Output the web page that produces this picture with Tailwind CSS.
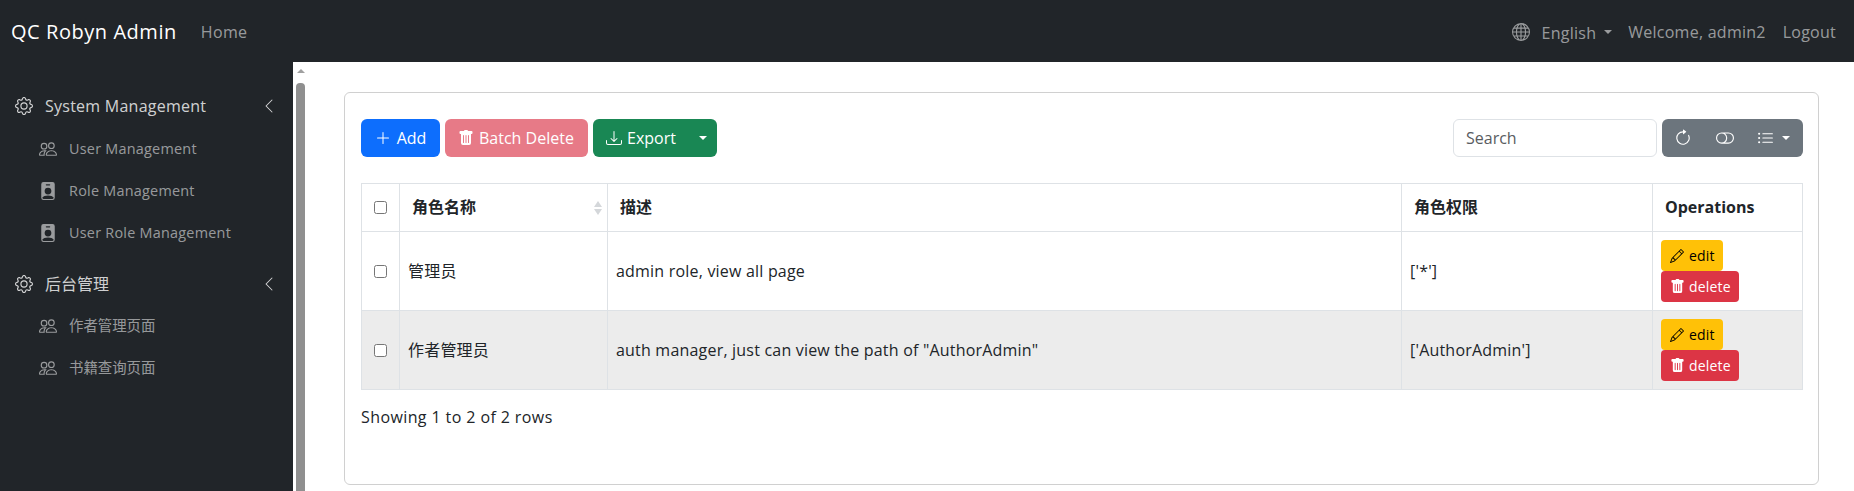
<!DOCTYPE html>
<html lang="en">
<head>
<meta charset="utf-8">
<title>QC Robyn Admin</title>
<script src="https://cdn.jsdelivr.net/npm/@tailwindcss/browser@4"></script>
</head>
<body class="h-[491px] w-[1854px] overflow-hidden bg-white font-['Open_Sans','Noto_Sans_CJK_SC',sans-serif] text-[16px] text-[#212529]">
<svg class="hidden">
<symbol id="gear" viewBox="0 0 16 16"><path d="M8 4.754a3.246 3.246 0 1 0 0 6.492 3.246 3.246 0 0 0 0-6.492zM5.754 8a2.246 2.246 0 1 1 4.492 0 2.246 2.246 0 0 1-4.492 0z"/><path d="M9.796 1.343c-.527-1.79-3.065-1.79-3.592 0l-.094.319a.873.873 0 0 1-1.255.52l-.292-.16c-1.64-.892-3.433.902-2.54 2.541l.159.292a.873.873 0 0 1-.52 1.255l-.319.094c-1.79.527-1.79 3.065 0 3.592l.319.094a.873.873 0 0 1 .52 1.255l-.16.292c-.892 1.64.901 3.434 2.541 2.54l.292-.159a.873.873 0 0 1 1.255.52l.094.319c.527 1.79 3.065 1.79 3.592 0l.094-.319a.873.873 0 0 1 1.255-.52l.292.16c1.64.893 3.434-.902 2.54-2.541l-.159-.292a.873.873 0 0 1 .52-1.255l.319-.094c1.79-.527 1.79-3.065 0-3.592l-.319-.094a.873.873 0 0 1-.52-1.255l.16-.292c.893-1.64-.902-3.433-2.541-2.54l-.292.159a.873.873 0 0 1-1.255-.52l-.094-.319zm-2.633.283c.246-.835 1.428-.835 1.674 0l.094.319a1.873 1.873 0 0 0 2.693 1.115l.291-.16c.764-.415 1.6.42 1.184 1.185l-.159.292a1.873 1.873 0 0 0 1.116 2.692l.318.094c.835.246.835 1.428 0 1.674l-.319.094a1.873 1.873 0 0 0-1.115 2.693l.16.291c.415.764-.42 1.6-1.185 1.184l-.291-.159a1.873 1.873 0 0 0-2.693 1.116l-.094.318c-.246.835-1.428.835-1.674 0l-.094-.319a1.873 1.873 0 0 0-2.692-1.115l-.292.16c-.764.415-1.6-.42-1.184-1.185l.159-.291A1.873 1.873 0 0 0 1.945 8.93l-.319-.094c-.835-.246-.835-1.428 0-1.674l.319-.094A1.873 1.873 0 0 0 3.06 4.377l-.16-.292c-.415-.764.42-1.6 1.185-1.184l.292.159a1.873 1.873 0 0 0 2.692-1.115l.094-.319z"/></symbol>
<symbol id="people" viewBox="0 0 16 16"><path d="M15 14s1 0 1-1-1-4-5-4-5 3-5 4 1 1 1 1h8Zm-7.978-1A.261.261 0 0 1 7 12.996c.001-.264.167-1.03.76-1.72C8.312 10.629 9.282 10 11 10c1.717 0 2.687.63 3.24 1.276.593.69.758 1.457.76 1.72l-.008.002a.274.274 0 0 1-.014.002H7.022ZM11 7a2 2 0 1 0 0-4 2 2 0 0 0 0 4Zm3-2a3 3 0 1 1-6 0 3 3 0 0 1 6 0ZM6.936 9.28a5.88 5.88 0 0 0-1.23-.247A7.35 7.35 0 0 0 5 9c-4 0-5 3-5 4 0 .667.333 1 1 1h4.216A2.238 2.238 0 0 1 5 13c0-1.01.377-2.042 1.09-2.904.243-.294.526-.569.846-.816ZM4.92 10A5.493 5.493 0 0 0 4 13H1c0-.26.164-1.03.76-1.724.545-.636 1.492-1.256 3.16-1.275ZM1.5 5.5a3 3 0 1 1 6 0 3 3 0 0 1-6 0Zm3-2a2 2 0 1 0 0 4 2 2 0 0 0 0-4Z"/></symbol>
<symbol id="badge" viewBox="0 0 16 16"><path d="M2 2a2 2 0 0 1 2-2h8a2 2 0 0 1 2 2v12a2 2 0 0 1-2 2H4a2 2 0 0 1-2-2V2zm4.5 0a.5.5 0 0 0 0 1h3a.5.5 0 0 0 0-1h-3zM8 11a3 3 0 1 0 0-6 3 3 0 0 0 0 6zm5 2.755C12.146 12.825 10.623 12 8 12s-4.146.826-5 1.755V14a1 1 0 0 0 1 1h8a1 1 0 0 0 1-1v-.245z"/></symbol>
<symbol id="chev" viewBox="0 0 16 16"><path fill-rule="evenodd" d="M11.354 1.646a.5.5 0 0 1 0 .708L5.707 8l5.647 5.646a.5.5 0 0 1-.708.708l-6-6a.5.5 0 0 1 0-.708l6-6a.5.5 0 0 1 .708 0z"/></symbol>
<symbol id="trash" viewBox="0 0 16 16"><path d="M2.5 1a1 1 0 0 0-1 1v1a1 1 0 0 0 1 1H3v9a2 2 0 0 0 2 2h6a2 2 0 0 0 2-2V4h.5a1 1 0 0 0 1-1V2a1 1 0 0 0-1-1H10a1 1 0 0 0-1-1H7a1 1 0 0 0-1 1H2.5zm3 4a.5.5 0 0 1 .5.5v7a.5.5 0 0 1-1 0v-7a.5.5 0 0 1 .5-.5zM8 5a.5.5 0 0 1 .5.5v7a.5.5 0 0 1-1 0v-7A.5.5 0 0 1 8 5zm3 .5v7a.5.5 0 0 1-1 0v-7a.5.5 0 0 1 1 0z"/></symbol>
<symbol id="pencil" viewBox="0 0 16 16"><path d="M12.146.146a.5.5 0 0 1 .708 0l3 3a.5.5 0 0 1 0 .708l-10 10a.5.5 0 0 1-.168.11l-5 2a.5.5 0 0 1-.65-.65l2-5a.5.5 0 0 1 .11-.168l10-10zM11.207 2.5 13.5 4.793 14.793 3.5 12.5 1.207 11.207 2.5zm1.586 3L10.5 3.207 4 9.707V10h.5a.5.5 0 0 1 .5.5v.5h.5a.5.5 0 0 1 .5.5v.5h.293l6.5-6.5zm-9.761 5.175-.106.106-1.528 3.821 3.821-1.528.106-.106A.5.5 0 0 1 5 12.5V12h-.5a.5.5 0 0 1-.5-.5V11h-.5a.5.5 0 0 1-.468-.325z"/></symbol>
</svg>

<header class="flex h-[62px] items-center bg-[#212529] pt-[1px] pr-[18px] pl-[11px]">
  <span class="text-[20px] tracking-[0.55px] text-white">QC Robyn Admin</span>
  <a class="ml-[24px] tracking-[0.3px] text-[#ffffff8c]">Home</a>
  <div class="ml-auto flex items-center tracking-[0.25px] text-[#ffffff8c]">
    <svg class="h-[18px] w-[18px] fill-current" viewBox="0 0 16 16"><path d="M0 8a8 8 0 1 1 16 0A8 8 0 0 1 0 8zm7.5-6.923c-.67.204-1.335.82-1.887 1.855A7.97 7.97 0 0 0 5.145 4H7.5V1.077zM4.09 4a9.267 9.267 0 0 1 .64-1.539 6.7 6.7 0 0 1 .597-.933A7.025 7.025 0 0 0 2.255 4H4.09zm-.582 3.5c.03-.877.138-1.718.312-2.5H1.674a6.958 6.958 0 0 0-.656 2.5h2.49zM4.847 5a12.5 12.5 0 0 0-.338 2.5H7.5V5H4.847zM8.5 5v2.5h2.99a12.495 12.495 0 0 0-.337-2.5H8.5zM4.51 8.5a12.5 12.5 0 0 0 .337 2.5H7.5V8.5H4.51zm3.99 0V11h2.653c.187-.765.306-1.608.338-2.5H8.5zM5.145 12c.138.386.295.744.468 1.068.552 1.035 1.218 1.65 1.887 1.855V12H5.145zm.182 2.472a6.696 6.696 0 0 1-.597-.933A9.268 9.268 0 0 1 4.09 12H2.255a7.024 7.024 0 0 0 3.072 2.472zM3.82 11a13.652 13.652 0 0 1-.312-2.5h-2.49c.062.89.291 1.733.656 2.5H3.82zm6.853 3.472A7.024 7.024 0 0 0 13.745 12H11.91a9.27 9.27 0 0 1-.64 1.539 6.688 6.688 0 0 1-.597.933zM8.5 12v2.923c.67-.204 1.335-.82 1.887-1.855.173-.324.33-.682.468-1.068H8.5zm3.68-1h2.146c.365-.767.594-1.61.656-2.5h-2.49a13.65 13.65 0 0 1-.312 2.5zm2.802-3.5a6.959 6.959 0 0 0-.656-2.5H12.18c.174.782.282 1.623.312 2.5h2.49zM11.27 2.461c.247.464.462.98.64 1.539h1.835a7.024 7.024 0 0 0-3.072-2.472c.218.284.418.598.597.933zM10.855 4a7.966 7.966 0 0 0-.468-1.068C9.835 1.897 9.17 1.282 8.5 1.077V4h2.355z"/></svg>
    <span class="mt-[2px] ml-[12px]">English</span>
    <span class="mt-[1px] ml-[8px] h-0 w-0 border-x-[4px] border-t-[4px] border-x-transparent border-t-current"></span>
    <span class="ml-[16px]">Welcome, admin2</span>
    <span class="ml-[17px]">Logout</span>
  </div>
</header>

<div class="flex h-[429px]">
  <aside class="w-[293px] shrink-0 bg-[#212529] pt-[24px] text-[14.4px] tracking-[0.25px] text-[#ffffff8c]">
    <div class="mb-[2px] flex h-[40px] items-center pr-[16px] pl-[15px] text-[16px] tracking-[0.25px] text-[#ffffffcc]">
      <svg class="h-[18px] w-[18px] fill-current"><use href="#gear"/></svg>
      <span class="ml-[12px]">System Management</span>
      <svg class="ml-auto h-[16px] w-[16px] fill-current"><use href="#chev"/></svg>
    </div>
    <div class="flex h-[42px] items-center pl-[39px]"><svg class="h-[18px] w-[18px] fill-current"><use href="#people"/></svg><span class="ml-[12px]">User Management</span></div>
    <div class="flex h-[42px] items-center pl-[39px]"><svg class="h-[18px] w-[18px] fill-current"><use href="#badge"/></svg><span class="ml-[12px]">Role Management</span></div>
    <div class="flex h-[42px] items-center pl-[39px]"><svg class="h-[18px] w-[18px] fill-current"><use href="#badge"/></svg><span class="ml-[12px]">User Role Management</span></div>
    <div class="mt-[10px] mb-[1px] flex h-[40px] items-center pr-[16px] pl-[15px] text-[16px] tracking-normal text-[#ffffffcc]">
      <svg class="h-[18px] w-[18px] fill-current"><use href="#gear"/></svg>
      <span class="ml-[12px]">后台管理</span>
      <svg class="ml-auto h-[16px] w-[16px] fill-current"><use href="#chev"/></svg>
    </div>
    <div class="flex h-[42px] items-center pl-[39px] tracking-normal"><svg class="h-[18px] w-[18px] fill-current"><use href="#people"/></svg><span class="ml-[12px]">作者管理页面</span></div>
    <div class="flex h-[42px] items-center pl-[39px] tracking-normal"><svg class="h-[18px] w-[18px] fill-current"><use href="#people"/></svg><span class="ml-[12px]">书籍查询页面</span></div>
  </aside>

  <div class="flex w-[12px] shrink-0 flex-col pt-[7px] pl-[3px]">
    <span class="ml-[1px] h-0 w-0 border-x-[4px] border-b-[4px] border-x-transparent border-b-[#a0a0a0]"></span>
    <span class="mt-[10px] w-[9px] flex-1 rounded-t-[4px] bg-[#8f8f8f]"></span>
  </div>

  <main class="min-w-0 flex-1 pt-[30px] pr-[35px] pl-[39px]">
    <section class="h-[393px] rounded-[6px] border border-[#d0d0d0] pt-[26px] pr-[15px] pl-[16px]">
      <div class="flex h-[38px] items-center text-white">
        <button class="flex h-[38px] w-[79px] items-center justify-center rounded-[6px] bg-[#0d6efd]">
          <svg class="mr-[6px] h-[16px] w-[16px] fill-current" viewBox="0 0 16 16"><path fill-rule="evenodd" d="M8 2a.5.5 0 0 1 .5.5v5h5a.5.5 0 0 1 0 1h-5v5a.5.5 0 0 1-1 0v-5h-5a.5.5 0 0 1 0-1h5v-5A.5.5 0 0 1 8 2Z"/></svg>Add
        </button>
        <button class="ml-[5px] flex h-[38px] w-[143px] items-center rounded-[6px] bg-[#e77a87] pl-[13px]">
          <svg class="mr-[5px] h-[16px] w-[16px] fill-current"><use href="#trash"/></svg>Batch Delete
        </button>
        <div class="ml-[5px] flex h-[38px] w-[124px] items-center rounded-[6px] bg-[#198754] pl-[13px]">
          <svg class="mr-[5px] h-[16px] w-[16px] fill-current" viewBox="0 0 16 16"><path d="M.5 9.9a.5.5 0 0 1 .5.5v2.5a1 1 0 0 0 1 1h12a1 1 0 0 0 1-1v-2.5a.5.5 0 0 1 1 0v2.5a2 2 0 0 1-2 2H2a2 2 0 0 1-2-2v-2.5a.5.5 0 0 1 .5-.5z"/><path d="M7.646 11.854a.5.5 0 0 0 .708 0l3-3a.5.5 0 0 0-.708-.708L8.5 10.293V1.5a.5.5 0 0 0-1 0v8.793L5.354 8.146a.5.5 0 1 0-.708.708l3 3z"/></svg>
          <span>Export</span>
          <span class="mr-[10px] ml-auto h-0 w-0 border-x-[4px] border-t-[4px] border-x-transparent border-t-white"></span>
        </div>
        <div class="ml-auto flex h-[38px] w-[204px] items-center rounded-[6px] border border-[#dee2e6] px-[12px] text-[#595c5f]">Search</div>
        <div class="ml-[5px] flex h-[38px] w-[141px] items-center rounded-[6px] bg-[#6c757d] pl-[12px]">
          <svg class="h-[18px] w-[18px] fill-current" viewBox="0 0 16 16"><path fill-rule="evenodd" d="M8 3a5 5 0 1 0 4.546 2.914.5.5 0 0 1 .908-.417A6 6 0 1 1 8 2v1z"/><path d="M8 4.466V.534a.25.25 0 0 1 .41-.192l2.36 1.966c.12.1.12.284 0 .384L8.41 4.658A.25.25 0 0 1 8 4.466z"/></svg>
          <svg class="ml-[24px] h-[18px] w-[18px] fill-current" viewBox="0 0 16 16"><path d="M11 4a4 4 0 0 1 0 8H8a4.992 4.992 0 0 0 2-4 4.992 4.992 0 0 0-2-4h3zm-6 8a4 4 0 1 1 0-8 4 4 0 0 1 0 8zM0 8a5 5 0 0 0 5 5h6a5 5 0 0 0 0-10H5a5 5 0 0 0-5 5z"/></svg>
          <svg class="ml-[23px] h-[17px] w-[17px] fill-current" viewBox="0 0 16 16"><path fill-rule="evenodd" d="M5 11.5a.5.5 0 0 1 .5-.5h9a.5.5 0 0 1 0 1h-9a.5.5 0 0 1-.5-.5zm0-4a.5.5 0 0 1 .5-.5h9a.5.5 0 0 1 0 1h-9a.5.5 0 0 1-.5-.5zm0-4a.5.5 0 0 1 .5-.5h9a.5.5 0 0 1 0 1h-9a.5.5 0 0 1-.5-.5zm-3 1a1 1 0 1 0 0-2 1 1 0 0 0 0 2zm0 4a1 1 0 1 0 0-2 1 1 0 0 0 0 2zm0 4a1 1 0 1 0 0-2 1 1 0 0 0 0 2z"/></svg>
          <span class="ml-[8px] h-0 w-0 border-x-[4px] border-t-[4px] border-x-transparent border-t-white"></span>
        </div>
      </div>

      <table class="mt-[26px] w-[1441px] table-fixed border-collapse text-left">
        <thead>
          <tr class="h-[48px]">
            <th class="w-[38px] border border-[#dee2e6] text-center font-normal"><span class="inline-block h-[13px] w-[13px] -translate-y-[2px] rounded-[2.5px] border border-[#767676] align-middle"></span></th>
            <th class="relative w-[208px] border border-[#dee2e6] px-[12px] pb-[2px] font-bold">角色名称
              <span class="absolute top-[17px] right-[5px] h-0 w-0 border-x-[4px] border-b-[6px] border-x-transparent border-b-[#d4d7da]"></span>
              <span class="absolute top-[25px] right-[5px] h-0 w-0 border-x-[4px] border-t-[6px] border-x-transparent border-t-[#d4d7da]"></span>
            </th>
            <th class="w-[794px] border border-[#dee2e6] px-[12px] pb-[2px] font-bold">描述</th>
            <th class="w-[251px] border border-[#dee2e6] px-[12px] pb-[2px] font-bold">角色权限</th>
            <th class="w-[150px] border border-[#dee2e6] px-[12px] pb-[2px] font-bold">Operations</th>
          </tr>
        </thead>
        <tbody class="tracking-[0.2px]">
          <tr class="h-[79px]">
            <td class="border border-[#dee2e6] text-center"><span class="inline-block h-[13px] w-[13px] -translate-y-px rounded-[2.5px] border border-[#767676] align-middle"></span></td>
            <td class="border border-[#dee2e6] px-[8px]">管理员</td>
            <td class="border border-[#dee2e6] px-[8px]">admin role, view all page</td>
            <td class="border border-[#dee2e6] px-[8px]">['*']</td>
            <td class="border border-[#dee2e6] px-[8px]">
              <div class="flex h-[31px] w-[62px] items-center rounded-[4px] bg-[#ffc107] pl-[9px] text-[14px] text-black"><svg class="mr-[5px] h-[14px] w-[14px] fill-current"><use href="#pencil"/></svg>edit</div>
              <div class="flex h-[31px] w-[78px] items-center rounded-[4px] bg-[#dc3545] pl-[9px] text-[14px] text-white"><svg class="mr-[4px] h-[15px] w-[15px] fill-current"><use href="#trash"/></svg>delete</div>
            </td>
          </tr>
          <tr class="h-[79px] bg-[#ececec]">
            <td class="border border-[#dee2e6] text-center"><span class="inline-block h-[13px] w-[13px] -translate-y-px rounded-[2.5px] border border-[#767676] bg-white align-middle"></span></td>
            <td class="border border-[#dee2e6] px-[8px]">作者管理员</td>
            <td class="border border-[#dee2e6] px-[8px]">auth manager, just can view the path of "AuthorAdmin"</td>
            <td class="border border-[#dee2e6] px-[8px]">['AuthorAdmin']</td>
            <td class="border border-[#dee2e6] px-[8px]">
              <div class="flex h-[31px] w-[62px] items-center rounded-[4px] bg-[#ffc107] pl-[9px] text-[14px] text-black"><svg class="mr-[5px] h-[14px] w-[14px] fill-current"><use href="#pencil"/></svg>edit</div>
              <div class="flex h-[31px] w-[78px] items-center rounded-[4px] bg-[#dc3545] pl-[9px] text-[14px] text-white"><svg class="mr-[4px] h-[15px] w-[15px] fill-current"><use href="#trash"/></svg>delete</div>
            </td>
          </tr>
        </tbody>
      </table>
      <p class="mt-[15px] tracking-[0.4px]">Showing 1 to 2 of 2 rows</p>
    </section>
  </main>
</div>
</body>
</html>
